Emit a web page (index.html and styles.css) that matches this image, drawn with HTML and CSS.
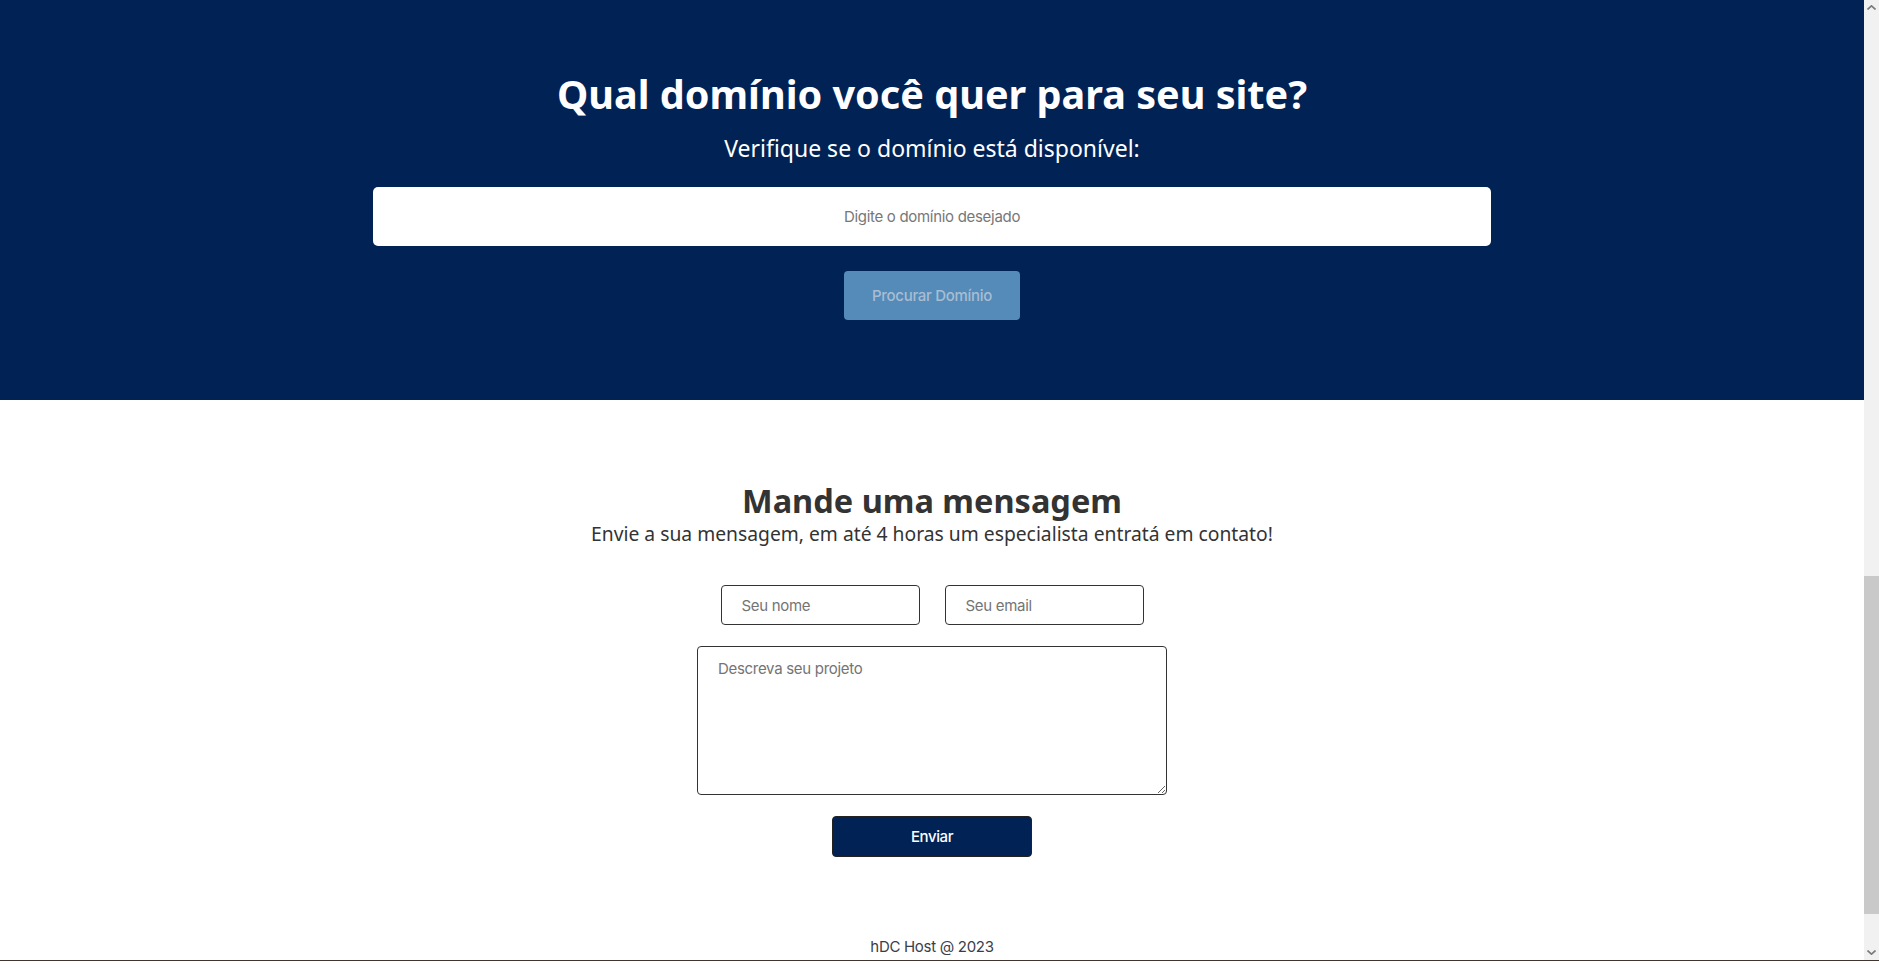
FILE: index.html
```html
<!DOCTYPE html>
<html lang="pt-BR">
<head>
<meta charset="utf-8">
<title>hDC Host</title>
<link rel="stylesheet" href="styles.css">
</head>
<body>
<div class="window">
  <div class="viewport">
    <div class="page">
      <section class="domain">
        <h1 class="domain-title">Qual domínio você quer para seu site?</h1>
        <p class="domain-sub">Verifique se o domínio está disponível:</p>
        <input class="domain-input" type="text" placeholder="Digite o domínio desejado">
        <button class="domain-btn" type="button" disabled>Procurar Domínio</button>
      </section>
      <section class="contact">
        <h2 class="contact-title">Mande uma mensagem</h2>
        <p class="contact-sub">Envie a sua mensagem, em até 4 horas um especialista entratá em contato!</p>
        <form class="contact-form">
          <div class="form-row">
            <input class="field" type="text" placeholder="Seu nome">
            <input class="field" type="email" placeholder="Seu email">
          </div>
          <textarea class="field-area" placeholder="Descreva seu projeto"></textarea>
          <button class="send-btn" type="button">Enviar</button>
        </form>
      </section>
      <footer class="footer">hDC Host @ 2023</footer>
    </div>
    <div class="scrollbar">
      <div class="sb-arrow">
        <svg width="9" height="5" viewBox="0 0 9 5"><path d="M0.5 4.5 L4.5 0.8 L8.5 4.5" fill="none" stroke="#7a7a7a" stroke-width="1.6"/></svg>
      </div>
      <div class="sb-track"><div class="sb-thumb"></div></div>
      <div class="sb-arrow">
        <svg width="9" height="5" viewBox="0 0 9 5"><path d="M0.5 0.5 L4.5 4.2 L8.5 0.5" fill="none" stroke="#7a7a7a" stroke-width="1.6"/></svg>
      </div>
    </div>
  </div>
</div>
</body>
</html>
```
FILE: styles.css
```css
html, body {
  margin: 0;
  padding: 0;
  background: #ffffff;
}
.window {
  height: 970px;
  overflow: hidden;
}
.viewport {
  display: flex;
  height: 960px;
  border-bottom: 1px solid #3f3430;
  overflow: hidden;
}
.page {
  flex: 1;
  display: flex;
  flex-direction: column;
  min-width: 0;
}
.domain {
  background: #012255;
  padding: 70px 0 80px;
  display: flex;
  flex-direction: column;
  align-items: center;
  height: 400px;
  box-sizing: border-box;
}
.domain-title {
  margin: 0;
  font-family: "Noto Sans", "DejaVu Sans", sans-serif;
  font-weight: 700;
  font-size: 39.6px;
  line-height: 48px;
  color: #ffffff;
}
.domain-sub {
  margin: 15px 0 0;
  font-family: "Noto Sans", "DejaVu Sans", sans-serif;
  font-size: 23px;
  line-height: 30px;
  color: #ffffff;
}
.domain-input {
  margin-top: 24px;
  width: 1118px;
  height: 59px;
  box-sizing: border-box;
  border: none;
  border-radius: 5px;
  background: #ffffff;
  text-align: center;
  font-family: Inter, "Liberation Sans", sans-serif;
  font-size: 15px;
  letter-spacing: -0.3px;
  outline: none;
}
.domain-input::placeholder {
  color: #777777;
}
.domain-btn {
  margin-top: 25px;
  width: 176px;
  height: 49px;
  border: none;
  border-radius: 4px;
  background: #548bb8;
  color: #a8bdd3;
  font-family: Inter, "Liberation Sans", sans-serif;
  font-size: 15px;
  font-weight: 500;
  letter-spacing: -0.3px;
}
.contact {
  display: flex;
  flex-direction: column;
  align-items: center;
  padding-top: 82px;
}
.contact-title {
  margin: 0;
  font-family: "Noto Sans", "DejaVu Sans", sans-serif;
  font-weight: 700;
  font-size: 32.5px;
  line-height: 38px;
  color: #333333;
}
.contact-sub {
  margin: 2px 0 0;
  font-family: "Noto Sans", "DejaVu Sans", sans-serif;
  font-size: 19.3px;
  line-height: 24px;
  color: #333333;
}
.contact-form {
  margin-top: 39px;
  display: flex;
  flex-direction: column;
  align-items: center;
}
.form-row {
  display: flex;
  gap: 25px;
}
.field {
  width: 199px;
  height: 40px;
  box-sizing: border-box;
  border: 1px solid #333333;
  border-radius: 4px;
  padding: 0 20px;
  font-family: Inter, "Liberation Sans", sans-serif;
  font-size: 15px;
  letter-spacing: -0.3px;
  outline: none;
}
.field::placeholder,
.field-area::placeholder {
  color: #747474;
}
.field-area {
  margin-top: 21px;
  width: 470px;
  height: 149px;
  box-sizing: border-box;
  border: 1px solid #333333;
  border-radius: 4px;
  padding: 12px 20px;
  font-family: Inter, "Liberation Sans", sans-serif;
  font-size: 15px;
  letter-spacing: -0.3px;
  outline: none;
  display: block;
}
.send-btn {
  margin-top: 21px;
  width: 200px;
  height: 41px;
  border: 1px solid #222222;
  border-radius: 4px;
  background: #012255;
  color: #ffffff;
  font-family: Inter, "Liberation Sans", sans-serif;
  font-size: 15px;
  font-weight: 500;
  letter-spacing: -0.4px;
}
.footer {
  margin-top: 80px;
  text-align: center;
  font-family: Inter, "Liberation Sans", sans-serif;
  font-size: 15px;
  letter-spacing: -0.3px;
  color: #3a3d48;
}
.scrollbar {
  width: 15px;
  flex: none;
  background: #f1f1f1;
  display: flex;
  flex-direction: column;
}
.sb-arrow {
  height: 15px;
  display: flex;
  align-items: center;
  justify-content: center;
  flex: none;
}
.sb-track {
  flex: 1;
  padding-top: 561px;
}
.sb-thumb {
  height: 338px;
  background: #c9c9c9;
}
```
